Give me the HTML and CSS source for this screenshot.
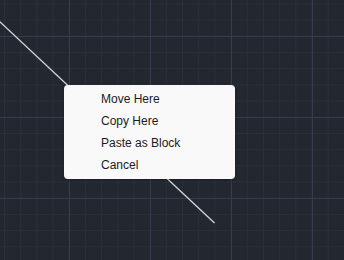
FILE: index.html
```html
<!DOCTYPE html>
<html lang="en">
<head>
    <meta charset="UTF-8">
    <meta name="viewport" content="width=device-width, initial-scale=1.0">
    <title>Drawing Canvas</title>
    <link rel="stylesheet" href="styles.css">
</head>
<body>
    <div class="canvas">
        <div class="grid minor"></div>
        <div class="grid major"></div>

        <svg class="drawing" width="344" height="260" viewBox="0 0 344 260">
            <line x1="-2" y1="20" x2="214.5" y2="223" stroke="#d4d7dc" stroke-width="1.3" />
        </svg>

        <ul class="context-menu">
            <li>Move Here</li>
            <li>Copy Here</li>
            <li>Paste as Block</li>
            <li>Cancel</li>
        </ul>
    </div>
</body>
</html>
```

FILE: styles.css
```css
html, body {
    margin: 0;
    padding: 0;
}
body {
    background-color: #222730;
    font-family: "Liberation Sans", Arial, sans-serif;
}
.canvas {
    position: relative;
    width: 344px;
    height: 260px;
    overflow: hidden;
    background-color: #222730;
}
.grid {
    position: absolute;
    inset: 0;
}
.grid.minor {
    background-image:
        linear-gradient(to right, #29303b 1px, transparent 1px),
        linear-gradient(to bottom, #29303b 1px, transparent 1px);
    background-size: 16.2px 16.2px;
    background-position: 4px 3.5px;
}
.grid.major {
    background-image:
        linear-gradient(to right, #343b4a 1px, transparent 1px),
        linear-gradient(to bottom, #343b4a 1px, transparent 1px);
    background-size: 81px 81px;
    background-position: 69px 36px;
}
.drawing {
    position: absolute;
    left: 0;
    top: 0;
}
.context-menu {
    position: absolute;
    left: 64px;
    top: 85px;
    width: 171px;
    margin: 0;
    padding: 3px 0;
    list-style: none;
    background-color: #f9f9f9;
    border-radius: 4px;
    box-shadow: 0 1px 3px rgba(0,0,0,0.25);
}
.context-menu li {
    height: 22px;
    line-height: 22px;
    padding-left: 37px;
    font-size: 12px;
    color: #1b1b1b;
}
```
